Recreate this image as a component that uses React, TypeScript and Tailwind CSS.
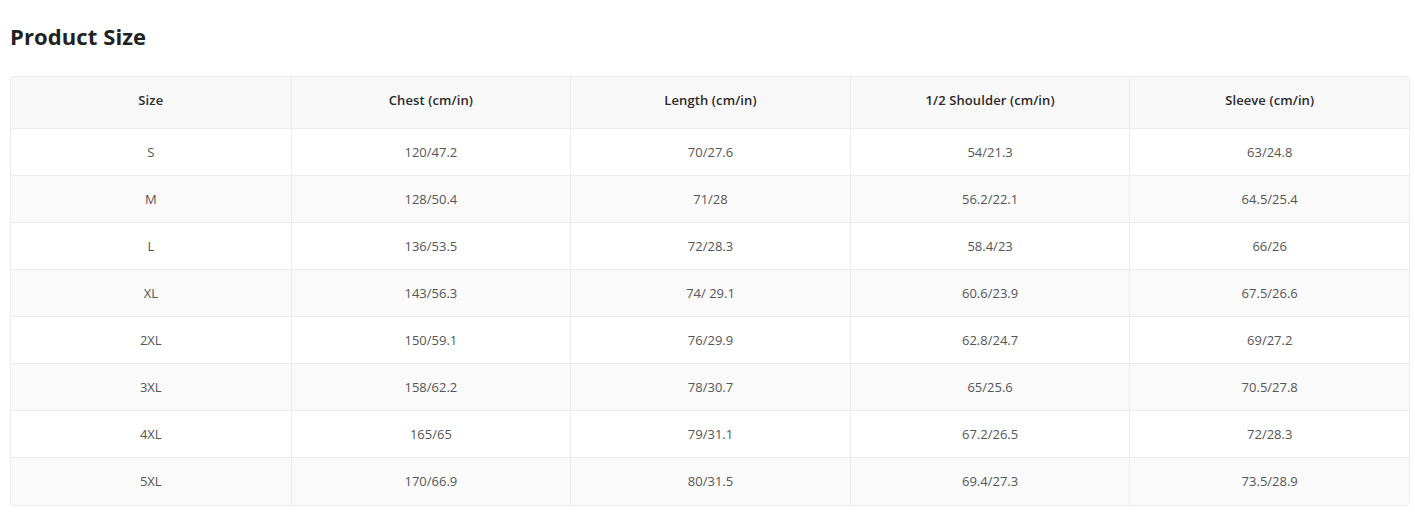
import React from "react";

const headers = ["Size", "Chest (cm/in)", "Length (cm/in)", "1/2 Shoulder (cm/in)", "Sleeve (cm/in)"];
const rows = [
  ["S", "120/47.2", "70/27.6", "54/21.3", "63/24.8"],
  ["M", "128/50.4", "71/28", "56.2/22.1", "64.5/25.4"],
  ["L", "136/53.5", "72/28.3", "58.4/23", "66/26"],
  ["XL", "143/56.3", "74/ 29.1", "60.6/23.9", "67.5/26.6"],
  ["2XL", "150/59.1", "76/29.9", "62.8/24.7", "69/27.2"],
  ["3XL", "158/62.2", "78/30.7", "65/25.6", "70.5/27.8"],
  ["4XL", "165/65", "79/31.1", "67.2/26.5", "72/28.3"],
  ["5XL", "170/66.9", "80/31.5", "69.4/27.3", "73.5/28.9"],
];

export default function App() {
  return (
    <div className="bg-white w-[1415px] h-[524px] px-[10px] pt-[21px]" style={{ fontFamily: '"Open Sans", "Noto Sans", sans-serif' }}>
      <h2 className="text-[22px] leading-[30px] font-bold text-[#222] tracking-[0.1px]">Product Size</h2>
      <div className="mt-[25px] w-[1400px] border border-[#ececec] rounded-[4px] overflow-hidden">
        <div className="grid grid-cols-5 h-[52px] bg-[#f8f8f8] border-b border-[#ececec]">
          {headers.map((h, i) => (
            <div key={h} className={`flex items-center justify-center pb-[4px] text-[13px] font-semibold text-[#2a2a2a] tracking-[0.1px] ${i > 0 ? "border-l border-[#ececec]" : ""}`}>
              {h}
            </div>
          ))}
        </div>
        {rows.map((r, ri) => (
          <div key={ri} className={`grid grid-cols-5 h-[47px] ${ri % 2 === 1 ? "bg-[#fafafa]" : "bg-white"} ${ri < rows.length - 1 ? "border-b border-[#ececec]" : ""}`}>
            {r.map((c, ci) => (
              <div key={ci} className={`flex items-center justify-center pt-[1px] text-[13px] text-[#555] ${ci > 0 ? "border-l border-[#ececec]" : ""}`}>
                {c}
              </div>
            ))}
          </div>
        ))}
      </div>
    </div>
  );
}
